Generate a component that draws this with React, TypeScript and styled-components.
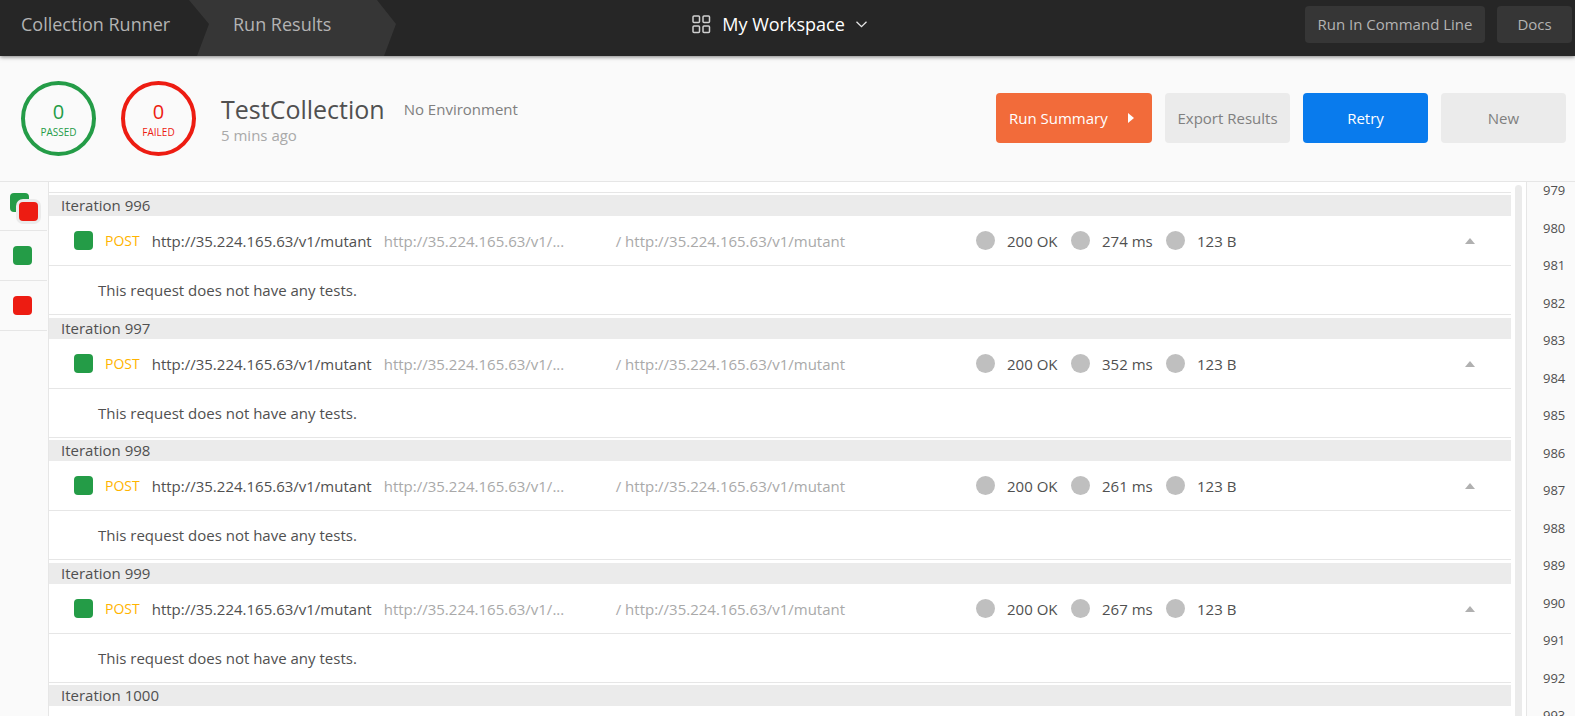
import React from "react";
import styled, { createGlobalStyle } from "styled-components";

const color = {
  dark: "#262626",
  darkRaised: "#363636",
  panel: "#fafafa",
  line: "#e6e6e6",
  fill: "#ebebeb",
  text: "#505050",
  muted: "#808080",
  faint: "#a9a9a9",
  pass: "#249c47",
  fail: "#ed1c12",
};

const GlobalStyle = createGlobalStyle`
  * { box-sizing: border-box; }
  body {
    margin: 0;
    font-family: "Open Sans", "Liberation Sans", sans-serif;
    font-size: 15px;
    color: ${color.text};
    background: #fff;
  }
  button {
    font: inherit;
    color: inherit;
    border: 0;
    padding: 0;
    background: none;
    cursor: pointer;
  }
`;

const Shell = styled.div`
  display: flex;
  flex-direction: column;
  height: 100vh;
  overflow: hidden;
`;

const TopBar = styled.header`
  display: grid;
  grid-template-columns: 1fr auto 1fr;
  flex: none;
  height: 56px;
  background: ${color.dark};
  box-shadow: 0 1px 4px rgba(0, 0, 0, 0.5);
  z-index: 1;
`;

const Crumbs = styled.nav`
  display: flex;
  font-size: 18px;
  line-height: 48px;
`;

const Crumb = styled.button<{ $active?: boolean }>`
  display: flex;
  color: #b3b3b3;
  white-space: nowrap;
  width: ${(p) => (p.$active ? 207 : 189)}px;
  padding-left: ${(p) => (p.$active ? 44 : 21)}px;
  background: ${(p) => (p.$active ? color.darkRaised : "transparent")};
  clip-path: ${(p) =>
    p.$active
      ? "polygon(0 0, calc(100% - 19px) 0, 100% 24px, calc(100% - 12px) 100%, 8px 100%, 20px 24px)"
      : "none"};
`;

const WorkspaceSwitch = styled.button`
  display: flex;
  align-items: center;
  gap: 11px;
  height: 48px;
  padding-right: 16px;
  color: #fff;
  font-size: 18px;
  font-weight: 500;
`;

const TopActions = styled.div`
  display: flex;
  justify-content: flex-end;
  gap: 12px;
  padding: 6px 3px 0 0;
`;

const TopButton = styled.button<{ $width: number }>`
  width: ${(p) => p.$width}px;
  height: 37px;
  padding-bottom: 2px;
  border-radius: 4px;
  background: ${color.darkRaised};
  color: #b3b3b3;
`;

const Summary = styled.section`
  display: flex;
  align-items: center;
  flex: none;
  height: 126px;
  padding: 0 9px 1px 21px;
  background: ${color.panel};
  border-bottom: 1px solid ${color.line};
`;

const Score = styled.div<{ $tone: string }>`
  display: flex;
  flex-direction: column;
  align-items: center;
  flex: none;
  width: 75px;
  height: 75px;
  margin-right: 25px;
  padding-top: 15px;
  border: 4px solid ${(p) => p.$tone};
  border-radius: 50%;
  color: ${(p) => p.$tone};
`;

const ScoreValue = styled.span`
  font-size: 20px;
  line-height: 24px;
`;

const ScoreLabel = styled.span`
  font-size: 10px;
  line-height: 16px;
`;

const RunInfo = styled.div`
  flex: 1;
  padding-top: 2px;
`;

const TitleLine = styled.div`
  display: flex;
  align-items: center;
  gap: 19px;
`;

const Title = styled.h1`
  margin: 0;
  font-size: 25px;
  font-weight: 400;
  line-height: 32px;
`;

const Environment = styled.span`
  color: ${color.muted};
`;

const When = styled.div`
  color: ${color.faint};
  line-height: 20px;
`;

const Actions = styled.div`
  display: flex;
  gap: 13px;
`;

const ActionButton = styled.button<{ $kind?: "summary" | "retry" }>`
  display: flex;
  align-items: center;
  justify-content: ${(p) => (p.$kind === "summary" ? "space-between" : "center")};
  width: ${(p) => (p.$kind === "summary" ? 156 : 125)}px;
  height: 50px;
  padding: ${(p) => (p.$kind === "summary" ? "0 18px 0 13px" : "0")};
  border-radius: 4px;
  white-space: nowrap;
  font-weight: ${(p) => (p.$kind ? 500 : 400)};
  color: ${(p) => (p.$kind ? "#fff" : color.muted)};
  background: ${(p) =>
    p.$kind === "summary" ? "#f26b3a" : p.$kind === "retry" ? "#097bed" : color.fill};
`;

const Body = styled.main`
  display: flex;
  flex: 1;
  min-height: 0;
`;

const Filters = styled.aside`
  flex: none;
  width: 49px;
  padding-right: 1px;
  background: ${color.panel};
  border-right: 1px solid ${color.line};
`;

const FilterButton = styled.button`
  display: flex;
  align-items: center;
  width: 100%;
  height: 50px;
  padding-left: 13px;
  border-bottom: 1px solid ${color.line};

  &:first-child {
    height: 49px;
    padding-top: 2px;
    padding-left: 10px;
  }
`;

const Swatch = styled.span<{ $tone: string }>`
  flex: none;
  width: 19px;
  height: 19px;
  border-radius: 4px;
  background: ${(p) => p.$tone};
`;

const SwatchPair = styled.span`
  position: relative;
  width: 28px;
  height: 28px;

  ${Swatch} {
    position: absolute;
    top: 0;
    left: 0;
  }

  ${Swatch} + ${Swatch} {
    top: 9px;
    left: 9px;
    box-shadow: 0 0 0 3px ${color.fill};
  }
`;

const Results = styled.div`
  flex: 1;
  min-width: 0;
  overflow: hidden;
`;

const PreviousEnd = styled.div`
  height: 11px;
  border-bottom: 1px solid ${color.line};
`;

const Iteration = styled.section`
  padding-top: 2px;

  &:nth-of-type(even) {
    padding-top: 3px;
  }
`;

const IterationTitle = styled.h2`
  margin: 0;
  padding-left: 12px;
  font-size: 15px;
  font-weight: 400;
  line-height: 21px;
  background: ${color.fill};
`;

const RequestRow = styled.div`
  display: flex;
  align-items: center;
  gap: 12px;
  height: 50px;
  padding: 0 36px 0 25px;
  border-bottom: 1px solid ${color.line};
  white-space: nowrap;
`;

const Method = styled.span`
  font-size: 14px;
  font-weight: 500;
  color: #ffb400;
`;

const RequestUrl = styled.span`
  flex: none;
  width: 220px;
`;

const ShortUrl = styled.span`
  flex: none;
  width: 220px;
  color: ${color.faint};
`;

const Path = styled.span`
  flex: 1;
  color: ${color.faint};
`;

const Stats = styled.div`
  display: flex;
  align-items: center;
  flex: none;
  width: 499px;
`;

const Stat = styled.span`
  display: flex;
  align-items: center;
  gap: 12px;
  width: 95px;

  &::before {
    content: "";
    width: 19px;
    height: 19px;
    border-radius: 50%;
    background: #bfbfbf;
  }
`;

const CollapseButton = styled.button`
  display: flex;
  margin-left: auto;
`;

const NoTests = styled.p`
  margin: 0;
  height: 49px;
  padding-left: 49px;
  line-height: 48px;
  border-bottom: 1px solid ${color.line};
`;

const ScrollTrack = styled.div`
  flex: none;
  width: 15px;
  padding: 3px 4px 0;
`;

const ScrollThumb = styled.div`
  height: 100%;
  border-radius: 4px 4px 0 0;
  background: ${color.fill};
`;

const IterationNav = styled.nav`
  flex: none;
  width: 49px;
  overflow: hidden;
  background: ${color.panel};
  border-left: 1px solid ${color.line};
`;

const IterationLink = styled.button`
  display: block;
  width: 100%;
  height: 37px;
  padding-left: 16px;
  font-size: 13px;
  line-height: 16px;
  text-align: left;

  &:nth-child(odd) {
    height: 38px;
  }

  &:first-child {
    height: 27px;
    padding-bottom: 11px;
  }
`;

const HOST = "http://35.224.165.63/v1/";
const REQUEST_URL = `${HOST}mutant`;

const iterations: { id: number; time?: string }[] = [
  { id: 996, time: "274 ms" },
  { id: 997, time: "352 ms" },
  { id: 998, time: "261 ms" },
  { id: 999, time: "267 ms" },
  { id: 1000 },
];

const navIds = Array.from({ length: 15 }, (_, i) => 979 + i);

const GridIcon = () => (
  <svg width="19" height="19" viewBox="0 0 19 19" fill="none" stroke="#d0d0d0" strokeWidth="1.5" aria-hidden="true">
    <rect x="1" y="1" width="6.5" height="6.5" rx="1" />
    <rect x="11" y="1" width="6.5" height="6.5" rx="1" />
    <rect x="1" y="11" width="6.5" height="6.5" rx="1" />
    <rect x="11" y="11" width="6.5" height="6.5" rx="1" />
  </svg>
);

const ChevronIcon = () => (
  <svg width="11" height="7" viewBox="0 0 11 7" fill="none" stroke="#e6e6e6" strokeWidth="1.3" aria-hidden="true">
    <path d="M0.5 0.7L5.5 5.7L10.5 0.7" />
  </svg>
);

const App: React.FC = () => (
  <>
    <GlobalStyle />
    <Shell>
      <TopBar>
        <Crumbs aria-label="Breadcrumb">
          <Crumb>Collection Runner</Crumb>
          <Crumb $active>Run Results</Crumb>
        </Crumbs>
        <WorkspaceSwitch>
          <GridIcon />
          My Workspace
          <ChevronIcon />
        </WorkspaceSwitch>
        <TopActions>
          <TopButton $width={180}>Run In Command Line</TopButton>
          <TopButton $width={75}>Docs</TopButton>
        </TopActions>
      </TopBar>

      <Summary>
        <Score $tone={color.pass}>
          <ScoreValue>0</ScoreValue>
          <ScoreLabel>PASSED</ScoreLabel>
        </Score>
        <Score $tone={color.fail}>
          <ScoreValue>0</ScoreValue>
          <ScoreLabel>FAILED</ScoreLabel>
        </Score>
        <RunInfo>
          <TitleLine>
            <Title>TestCollection</Title>
            <Environment>No Environment</Environment>
          </TitleLine>
          <When>5 mins ago</When>
        </RunInfo>
        <Actions>
          <ActionButton $kind="summary">
            Run Summary
            <svg width="6" height="10" viewBox="0 0 6 10" aria-hidden="true">
              <path d="M0 0L6 5L0 10Z" fill="#fff" />
            </svg>
          </ActionButton>
          <ActionButton>Export Results</ActionButton>
          <ActionButton $kind="retry">Retry</ActionButton>
          <ActionButton>New</ActionButton>
        </Actions>
      </Summary>

      <Body>
        <Filters>
          <FilterButton aria-label="All results">
            <SwatchPair>
              <Swatch $tone={color.pass} />
              <Swatch $tone={color.fail} />
            </SwatchPair>
          </FilterButton>
          <FilterButton aria-label="Passed">
            <Swatch $tone={color.pass} />
          </FilterButton>
          <FilterButton aria-label="Failed">
            <Swatch $tone={color.fail} />
          </FilterButton>
        </Filters>

        <Results>
          <PreviousEnd />
          {iterations.map(({ id, time }) => (
            <Iteration key={id}>
              <IterationTitle>Iteration {id}</IterationTitle>
              {time && (
                <>
                  <RequestRow>
                    <Swatch $tone={color.pass} />
                    <Method>POST</Method>
                    <RequestUrl>{REQUEST_URL}</RequestUrl>
                    <ShortUrl title={REQUEST_URL}>{HOST}...</ShortUrl>
                    <Path>/ {REQUEST_URL}</Path>
                    <Stats>
                      <Stat>200 OK</Stat>
                      <Stat>{time}</Stat>
                      <Stat>123 B</Stat>
                      <CollapseButton aria-label={`Collapse iteration ${id}`}>
                        <svg width="10" height="6" viewBox="0 0 10 6" aria-hidden="true">
                          <path d="M0 6L5 0L10 6Z" fill="#b0b0b0" />
                        </svg>
                      </CollapseButton>
                    </Stats>
                  </RequestRow>
                  <NoTests>This request does not have any tests.</NoTests>
                </>
              )}
            </Iteration>
          ))}
        </Results>

        <ScrollTrack>
          <ScrollThumb />
        </ScrollTrack>

        <IterationNav aria-label="Iterations">
          {navIds.map((id) => (
            <IterationLink key={id}>{id}</IterationLink>
          ))}
        </IterationNav>
      </Body>
    </Shell>
  </>
);

export default App;
